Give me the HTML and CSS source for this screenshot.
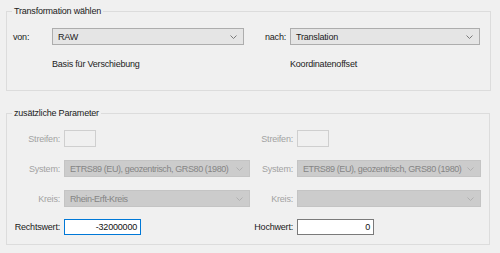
FILE: index.html
```html
<!DOCTYPE html>
<html lang="de">
<head>
  <meta charset="UTF-8" />
  <title>Transformation</title>
  <link rel="stylesheet" href="styles.css">
</head>
<body>
  <fieldset class="group group-top">
    <legend>Transformation wählen</legend>
    <div class="pick-grid">
      <span class="lbl-left">von:</span>
      <div class="combo">
        <span>RAW</span>
        <svg class="chev" width="7" height="4" viewBox="0 0 7 4"><polyline points="0.5,0.5 3.5,3.5 6.5,0.5" /></svg>
      </div>
      <span class="lbl-right">nach:</span>
      <div class="combo">
        <span>Translation</span>
        <svg class="chev" width="7" height="4" viewBox="0 0 7 4"><polyline points="0.5,0.5 3.5,3.5 6.5,0.5" /></svg>
      </div>
      <span></span>
      <span class="hint">Basis für Verschiebung</span>
      <span></span>
      <span class="hint">Koordinatenoffset</span>
    </div>
  </fieldset>

  <fieldset class="group group-params">
    <legend>zusätzliche Parameter</legend>
    <div class="param-grid">
      <span class="plbl off">Streifen:</span>
      <div><div class="tbox off-box small"></div></div>
      <span class="plbl off">Streifen:</span>
      <div><div class="tbox off-box small"></div></div>

      <span class="plbl off">System:</span>
      <div class="combo off-combo">
        <span>ETRS89 (EU), geozentrisch, GRS80 (1980)</span>
        <svg class="chev" width="7" height="4" viewBox="0 0 7 4"><polyline points="0.5,0.5 3.5,3.5 6.5,0.5" /></svg>
      </div>
      <span class="plbl off">System:</span>
      <div class="combo off-combo">
        <span>ETRS89 (EU), geozentrisch, GRS80 (1980)</span>
        <svg class="chev" width="7" height="4" viewBox="0 0 7 4"><polyline points="0.5,0.5 3.5,3.5 6.5,0.5" /></svg>
      </div>

      <span class="plbl off">Kreis:</span>
      <div class="combo off-combo">
        <span>Rhein-Erft-Kreis</span>
        <svg class="chev" width="7" height="4" viewBox="0 0 7 4"><polyline points="0.5,0.5 3.5,3.5 6.5,0.5" /></svg>
      </div>
      <span class="plbl off">Kreis:</span>
      <div class="combo off-combo">
        <span></span>
        <svg class="chev" width="7" height="4" viewBox="0 0 7 4"><polyline points="0.5,0.5 3.5,3.5 6.5,0.5" /></svg>
      </div>

      <span class="plbl">Rechtswert:</span>
      <div><div class="tbox num focus">-32000000</div></div>
      <span class="plbl">Hochwert:</span>
      <div><div class="tbox num">0</div></div>
    </div>
  </fieldset>
</body>
</html>
```

FILE: styles.css
```css
* {
  margin: 0;
  padding: 0;
  box-sizing: border-box;
}

body {
  width: 500px;
  height: 253px;
  background: #f0f0f0;
  font-family: 'Liberation Sans', Arial, sans-serif;
  font-size: 9px;
  letter-spacing: -0.2px;
  color: #1a1a1a;
  padding: 5px 0 0 6px;
  overflow: hidden;
}

.group {
  border: 1px solid #dcdcdc;
  width: 485px;
  min-width: 0;
}

.group legend {
  margin-left: 5px;
  padding: 0 2px;
  line-height: 13px;
}

.group-top {
  height: 86px;
}

.group-params {
  margin-top: 16px;
  width: 484px;
  height: 138px;
}

/* top group: von / nach */
.pick-grid {
  display: grid;
  grid-template-columns: 39px 192px 46px 190px;
  grid-template-rows: 17px 17px;
  row-gap: 10px;
  padding: 10px 0 0 6px;
  align-items: center;
}

.lbl-left {
  color: #222;
}

.lbl-right {
  text-align: right;
  padding-right: 4px;
}

.hint {
  color: #222;
}

.combo {
  height: 17px;
  background: #e5e5e5;
  border: 1px solid #adadad;
  display: flex;
  align-items: center;
  justify-content: space-between;
  padding: 0 6px 0 5px;
  white-space: nowrap;
  overflow: hidden;
}

.chev polyline {
  fill: none;
  stroke: #7a7a7a;
  stroke-width: 1;
}

/* parameter group */
.param-grid {
  display: grid;
  grid-template-columns: 57px 186px 47px 184px;
  grid-template-rows: 17px 17px 17px 16px;
  row-gap: 13px;
  padding-top: 10px;
  align-items: center;
}

.param-grid > :nth-child(n+13) {
  margin-top: -3px;
}

.plbl {
  text-align: right;
  padding-right: 4px;
  white-space: nowrap;
}

.off {
  color: #a2a2a2;
}

.off-combo {
  background: #cccccc;
  border-color: #c4c4c4;
  color: #858585;
  letter-spacing: -0.4px;
}

.off-combo .chev polyline {
  stroke: #b0b0b0;
}

.tbox {
  height: 16px;
  background: #fff;
  border: 1px solid #7a7a7a;
  line-height: 14px;
  padding: 0 3px;
}

.small {
  width: 32px;
  height: 17px;
}

.off-box {
  background: #f0f0f0;
  border-color: #cfcfcf;
}

.num {
  width: 77px;
  text-align: right;
  color: #111;
}

.focus {
  border-color: #0078d7;
}
```
